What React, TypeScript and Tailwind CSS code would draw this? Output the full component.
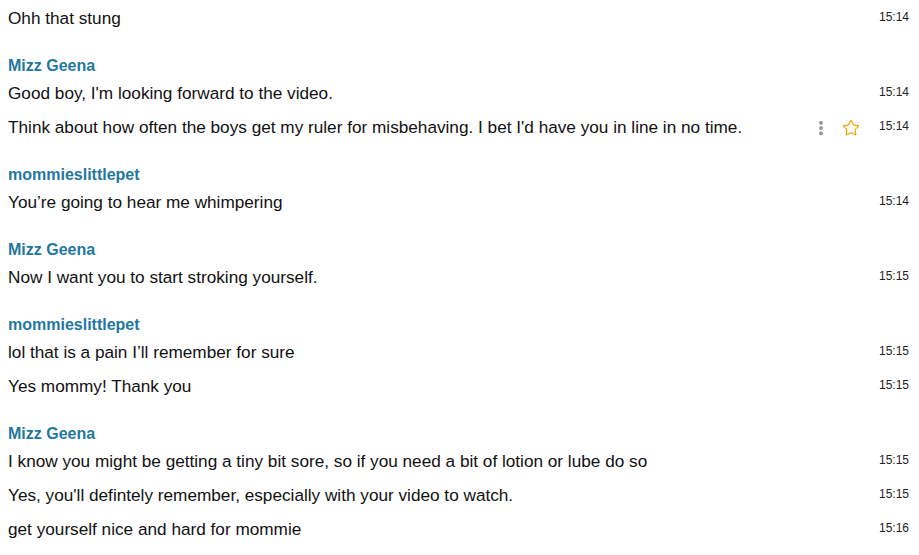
import { MoreVertical, Star } from "lucide-react";

type Msg = { text: string; time: string; actions?: boolean };
type Group = { name?: string; msgs: Msg[] };

const groups: Group[] = [
  { msgs: [{ text: "Ohh that stung", time: "15:14" }] },
  {
    name: "Mizz Geena",
    msgs: [
      { text: "Good boy, I'm looking forward to the video.", time: "15:14" },
      {
        text: "Think about how often the boys get my ruler for misbehaving. I bet I'd have you in line in no time.",
        time: "15:14",
        actions: true,
      },
    ],
  },
  { name: "mommieslittlepet", msgs: [{ text: "You\u2019re going to hear me whimpering", time: "15:14" }] },
  { name: "Mizz Geena", msgs: [{ text: "Now I want you to start stroking yourself.", time: "15:15" }] },
  {
    name: "mommieslittlepet",
    msgs: [
      { text: "lol that is a pain I\u2019ll remember for sure", time: "15:15" },
      { text: "Yes mommy! Thank you", time: "15:15" },
    ],
  },
  {
    name: "Mizz Geena",
    msgs: [
      { text: "I know you might be getting a tiny bit sore, so if you need a bit of lotion or lube do so", time: "15:15" },
      { text: "Yes, you'll defintely remember, especially with your video to watch.", time: "15:15" },
      { text: "get yourself nice and hard for mommie", time: "15:16" },
    ],
  },
];

const Row = ({ msg }: { msg: Msg }) => (
  <div className="flex h-[34px] items-center pl-2 pr-[10px]">
    <div className="-mt-[2px] flex-1 text-[17.2px] leading-5 text-[#111]">{msg.text}</div>
    {msg.actions && (
      <div className="mr-[18px] flex items-center gap-[12px]">
        <MoreVertical size={18} strokeWidth={3} className="text-[#8a8a8a]" />
        <Star size={18} strokeWidth={1.6} className="text-[#f5a400]" />
      </div>
    )}
    <div className="-mt-[5px] w-[31px] text-right text-[12px] leading-4 text-[#222]">{msg.time}</div>
  </div>
);

export default function App() {
  return (
    <div className="h-[555px] w-[919px] overflow-hidden bg-white pt-[2px]" style={{ fontFamily: '"Liberation Sans", Arial, sans-serif' }}>
      {groups.map((g, gi) => (
        <div key={gi}>
          {g.name && (
            <div className="h-[41px] pl-2 pt-[20px] text-[16px] font-bold leading-5 text-[#1f78a0]">{g.name}</div>
          )}
          {g.msgs.map((m, mi) => (
            <Row key={mi} msg={m} />
          ))}
        </div>
      ))}
    </div>
  );
}
